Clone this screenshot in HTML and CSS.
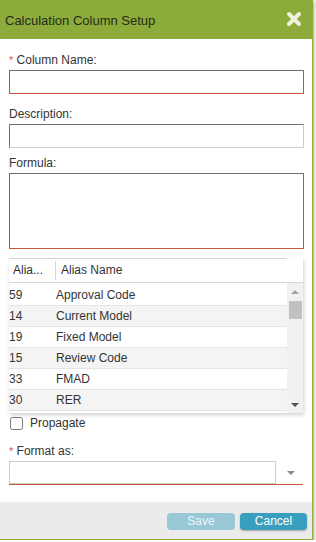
FILE: index.html
```html
<!DOCTYPE html>
<html lang="en">
<head>
  <meta charset="UTF-8">
  <meta name="viewport" content="width=device-width, initial-scale=1.0">
  <title>Calculation Column Setup</title>
  <link rel="stylesheet" href="styles.css">
</head>
<body>
  <div class="dialog">
    <!-- Header -->
    <div class="dialog-header">
      <span class="dialog-title">Calculation Column Setup</span>
      <svg class="close-icon" width="16" height="16" viewBox="0 0 16 16">
        <path d="M3 3 L13 13 M13 3 L3 13" stroke="#eef1dc" stroke-width="4" stroke-linecap="round"/>
      </svg>
    </div>

    <!-- Body -->
    <div class="dialog-body">
      <div class="field field-name">
        <label class="field-label"><span class="req">*</span> Column Name:</label>
        <input type="text" class="text-input invalid">
      </div>

      <div class="field field-desc">
        <label class="field-label">Description:</label>
        <input type="text" class="text-input">
      </div>

      <div class="field field-formula">
        <label class="field-label">Formula:</label>
        <textarea class="text-input formula-input invalid"></textarea>
      </div>

      <!-- Alias Grid -->
      <div class="alias-grid">
        <div class="grid-head">
          <div class="col-id">Alia...</div>
          <div class="col-name">Alias Name</div>
        </div>
        <div class="grid-content">
          <div class="grid-rows">
            <div class="grid-row"><span class="cell-id">59</span><span class="cell-name">Approval Code</span></div>
            <div class="grid-row alt"><span class="cell-id">14</span><span class="cell-name">Current Model</span></div>
            <div class="grid-row"><span class="cell-id">19</span><span class="cell-name">Fixed Model</span></div>
            <div class="grid-row alt"><span class="cell-id">15</span><span class="cell-name">Review Code</span></div>
            <div class="grid-row"><span class="cell-id">33</span><span class="cell-name">FMAD</span></div>
            <div class="grid-row alt"><span class="cell-id">30</span><span class="cell-name">RER</span></div>
          </div>
          <div class="scrollbar">
            <span class="arrow-up"></span>
            <span class="thumb"></span>
            <span class="arrow-down"></span>
          </div>
        </div>
      </div>

      <label class="check-row"><input type="checkbox" class="check-box"> Propagate</label>

      <div class="field field-format">
        <label class="field-label"><span class="req">*</span> Format as:</label>
        <div class="select-box">
          <div class="select-value"></div>
          <span class="select-arrow"></span>
        </div>
      </div>
    </div>

    <!-- Footer -->
    <div class="dialog-footer">
      <button class="btn btn-save" disabled>Save</button>
      <button class="btn btn-cancel">Cancel</button>
    </div>
  </div>
</body>
</html>
```

FILE: styles.css
```css
body {
  margin: 0;
  background-color: #fafafa;
  font-family: "Liberation Sans", Arial, sans-serif;
  color: #333;
}
.dialog {
  width: 312px;
  height: 539px;
  background-color: white;
  border-right: 1px solid #8fac3a;
  border-bottom: 1px solid #8fac3a;
  box-shadow: 1px 1px 3px rgba(0, 0, 0, 0.35);
  display: flex;
  flex-direction: column;
}
.dialog-header {
  height: 39px;
  background-color: #8dab3a;
  display: flex;
  align-items: center;
  justify-content: space-between;
  padding: 0 10px 0 5px;
  flex-shrink: 0;
}
.dialog-title {
  font-size: 13px;
  color: #262b1a;
  margin-top: 1px;
}
.close-icon {
  margin-top: -2px;
}
.dialog-body {
  padding: 13px 9px 0 9px;
  flex: 1;
}
.field-label {
  display: block;
  font-size: 12px;
  line-height: 16px;
  margin-bottom: 2px;
}
.req {
  color: #e0534a;
  font-size: 11px;
}
.field-name { margin-bottom: 12px; }
.field-desc { margin-bottom: 7px; }
.field-formula { margin-bottom: 9px; }
.text-input {
  display: block;
  box-sizing: border-box;
  width: 295px;
  height: 24px;
  margin: 0;
  padding: 2px 4px;
  border: 1px solid;
  border-color: #707070 #cccccc #cccccc #707070;
  font-family: inherit;
  font-size: 12px;
  background: white;
}
.text-input.invalid {
  border-color: #707070 #c9533f #c9533f #707070;
}
.formula-input {
  height: 76px;
  resize: none;
}

/* alias grid */
.alias-grid {
  width: 294px;
  box-shadow: 1px 2px 4px rgba(0, 0, 0, 0.18);
  background: white;
}
.grid-head {
  display: flex;
  height: 23px;
  width: 278px;
  border-top: 1px solid #d6d6d6;
  font-size: 12px;
  position: relative;
}
.grid-head::after {
  content: "";
  position: absolute;
  left: 0;
  bottom: -1px;
  width: 294px;
  border-bottom: 1px solid #d6d6d6;
}
.col-id {
  width: 42px;
  padding-left: 4px;
  border-right: 1px solid #d6d6d6;
  margin: 2px 0;
  line-height: 19px;
}
.col-name {
  padding-left: 5px;
  line-height: 23px;
}
.grid-content {
  display: flex;
  height: 130px;
  margin-top: 1px;
}
.grid-rows {
  width: 278px;
  padding-top: 2px;
}
.grid-row {
  display: flex;
  height: 20px;
  line-height: 21px;
  border-bottom: 1px solid #e4e4e4;
  font-size: 12px;
}
.grid-row.alt {
  background-color: #f4f4f4;
}
.cell-id {
  width: 47px;
}
.scrollbar {
  width: 16px;
  background-color: #f1f1f1;
  position: relative;
}
.arrow-up,
.arrow-down {
  position: absolute;
  left: 4px;
  width: 0;
  height: 0;
  border-left: 4px solid transparent;
  border-right: 4px solid transparent;
}
.arrow-up {
  top: 7px;
  border-bottom: 4px solid #a3a3a3;
}
.arrow-down {
  bottom: 6px;
  border-top: 4px solid #505050;
}
.thumb {
  position: absolute;
  top: 18px;
  left: 2px;
  width: 13px;
  height: 18px;
  background-color: #c1c1c1;
}

.check-row {
  display: flex;
  align-items: center;
  margin-top: 3px;
  font-size: 12px;
  line-height: 14px;
}
.check-box {
  width: 13px;
  height: 13px;
  margin: 0 7px 0 1px;
}
.field-format {
  margin-top: 13px;
}
.select-box {
  display: flex;
  width: 294px;
  border-bottom: 1px solid #c9533f;
}
.select-value {
  width: 265px;
  height: 21px;
  border: 1px solid #cccccc;
}
.select-arrow {
  margin: 10px 0 0 11px;
  width: 0;
  height: 0;
  border-left: 4px solid transparent;
  border-right: 4px solid transparent;
  border-top: 4px solid #8a8a8a;
}

.dialog-footer {
  height: 37px;
  background-color: #ebebeb;
  display: flex;
  justify-content: flex-end;
  align-items: flex-start;
  gap: 5px;
  padding: 11px 5px 0 0;
  box-sizing: border-box;
  flex-shrink: 0;
}
.btn {
  height: 17px;
  border: none;
  border-radius: 4px;
  color: white;
  font-family: inherit;
  font-size: 12px;
  padding: 0;
  line-height: 17px;
}
.btn-save {
  width: 68px;
  background-color: #98c8d6;
  color: #eef6f8;
}
.btn-cancel {
  width: 67px;
  background-color: #3a9fbe;
  box-shadow: 0 1px 2px rgba(0, 0, 0, 0.3);
  cursor: pointer;
}
```
